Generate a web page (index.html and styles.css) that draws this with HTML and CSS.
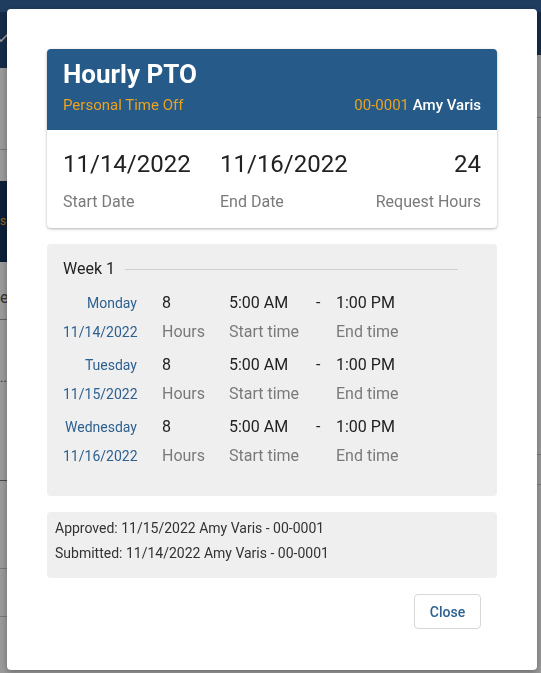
FILE: index.html
```html
<!DOCTYPE html>
<html lang="en">
<head>
<meta charset="utf-8">
<title>Hourly PTO</title>
<link rel="stylesheet" href="styles.css">
</head>
<body>
<div class="app">
  <div class="app-left">
    <div class="bar bar-tall">
      <div class="bar-strip"></div>
      <svg class="bar-check" width="12" height="10" viewBox="0 0 12 10"><polyline points="1,5 4,8 11,1" fill="none" stroke="#ffffff" stroke-width="1.6"/></svg>
    </div>
    <div class="pane pane-a"></div>
    <div class="pane pane-gap"></div>
    <div class="navy-block"><span class="nb-orange">s</span> <span class="nb-blue">for</span></div>
    <div class="pane pane-ee"><span class="ee">eekly</span></div>
    <div class="pane pane-dots"><span class="dots">...</span></div>
    <div class="pane pane-c"></div>
    <div class="pane pane-d"></div>
    <div class="pane pane-e"></div>
  </div>
  <div class="app-right">
    <div class="bar bar-short"><div class="bar-strip"></div></div>
    <div class="pane pane-r1"></div>
    <div class="pane pane-r2"></div>
    <div class="pane pane-r3"></div>
  </div>
</div>
<div class="backdrop"></div>

<div class="modal">
  <section class="card">
    <div class="card-head">
      <h1 class="title">Hourly PTO</h1>
      <div class="subline">
        <span class="type">Personal Time Off</span>
        <span class="who"><span class="emp-id">00-0001</span> <span class="emp-name">Amy Varis</span></span>
      </div>
    </div>
    <div class="card-body">
      <div class="stat">
        <div class="stat-value">11/14/2022</div>
        <div class="stat-label">Start Date</div>
      </div>
      <div class="stat">
        <div class="stat-value">11/16/2022</div>
        <div class="stat-label">End Date</div>
      </div>
      <div class="stat stat-right">
        <div class="stat-value">24</div>
        <div class="stat-label">Request Hours</div>
      </div>
    </div>
  </section>

  <section class="week">
    <div class="week-head">
      <span class="week-title">Week 1</span>
      <span class="week-rule"></span>
    </div>

    <div class="day">
      <span class="day-name">Monday</span>
      <span class="val pad">8</span>
      <span class="val">5:00 AM</span>
      <span class="val dash">-</span>
      <span class="val">1:00 PM</span>
      <span class="day-date">11/14/2022</span>
      <span class="lbl pad">Hours</span>
      <span class="lbl">Start time</span>
      <span class="lbl"></span>
      <span class="lbl">End time</span>
    </div>

    <div class="day">
      <span class="day-name">Tuesday</span>
      <span class="val pad">8</span>
      <span class="val">5:00 AM</span>
      <span class="val dash">-</span>
      <span class="val">1:00 PM</span>
      <span class="day-date">11/15/2022</span>
      <span class="lbl pad">Hours</span>
      <span class="lbl">Start time</span>
      <span class="lbl"></span>
      <span class="lbl">End time</span>
    </div>

    <div class="day">
      <span class="day-name">Wednesday</span>
      <span class="val pad">8</span>
      <span class="val">5:00 AM</span>
      <span class="val dash">-</span>
      <span class="val">1:00 PM</span>
      <span class="day-date">11/16/2022</span>
      <span class="lbl pad">Hours</span>
      <span class="lbl">Start time</span>
      <span class="lbl"></span>
      <span class="lbl">End time</span>
    </div>
  </section>

  <section class="history">
    <div class="history-line">Approved: 11/15/2022 Amy Varis - 00-0001</div>
    <div class="history-line">Submitted: 11/14/2022 Amy Varis - 00-0001</div>
  </section>

  <div class="actions">
    <button class="btn-close" type="button">Close</button>
  </div>
</div>
</body>
</html>
```

FILE: styles.css
```css
* { box-sizing: border-box; }

html, body {
  margin: 0;
  padding: 0;
  height: 100%;
}

body {
  font-family: Roboto, "Liberation Sans", Arial, sans-serif;
  background: #ffffff;
  overflow: hidden;
}

/* ---------- background app ---------- */
.app {
  display: flex;
  height: 673px;
  background: #ffffff;
}

.app-left { width: 270px; }
.app-right { flex: 1; }

.bar {
  position: relative;
  background: #234a78;
}
.bar-tall { height: 68px; }
.bar-short { height: 55px; }

.bar-strip {
  height: 12px;
  background: #32669e;
}

.bar-check {
  position: absolute;
  left: -3px;
  top: 33px;
}

.pane {
  border-bottom: 1px solid #c8c8c8;
}
.pane-a { height: 82px; }
.pane-gap { height: 31px; border-bottom: none; }

.navy-block {
  height: 81px;
  background: #14345d;
  font-size: 12px;
  line-height: 80px;
  white-space: nowrap;
}
.nb-orange { color: #f3a527; }
.nb-blue { color: #4a90d9; }

.pane-ee {
  height: 58px;
  padding-top: 26px;
  font-size: 16px;
  color: #555555;
  white-space: nowrap;
  border-bottom-color: #a0a0a0;
}

.pane-dots {
  height: 161px;
  padding-top: 50px;
  font-size: 13px;
  color: #555555;
  white-space: nowrap;
  border-bottom-color: #777777;
}

.pane-c { height: 88px; }
.pane-d { height: 48px; }
.pane-e { height: 50px; border-bottom: none; }

.pane-r1 { height: 63px; }
.pane-r2 { height: 337px; }
.pane-r3 { height: 30px; }

.backdrop {
  position: fixed;
  inset: 0;
  background: rgba(0, 0, 0, 0.4);
}

/* ---------- modal ---------- */
.modal {
  position: fixed;
  left: 7px;
  top: 9px;
  width: 530px;
  height: 661px;
  background: #ffffff;
  border-radius: 4px;
  box-shadow: 0 2px 6px rgba(0, 0, 0, 0.3);
  padding: 40px 40px 0;
}

.card {
  border-radius: 4px;
  background: #ffffff;
  box-shadow: 0 1px 3px rgba(0, 0, 0, 0.3);
  overflow: hidden;
}

.card-head {
  background: #265a88;
  padding: 10px 16px 15px;
}

.title {
  margin: 0;
  font-size: 26px;
  line-height: 30px;
  font-weight: 700;
  color: #ffffff;
}

.subline {
  margin-top: 6px;
  display: flex;
  justify-content: space-between;
  align-items: baseline;
  font-size: 15px;
  line-height: 20px;
}

.type { color: #eba21f; }
.emp-id { color: #eba21f; }
.emp-name { color: #ffffff; font-weight: 500; }

.card-body {
  display: grid;
  grid-template-columns: 157px 1fr auto;
  padding: 20px 16px 16px;
}

.stat-right { text-align: right; }

.stat-value {
  font-size: 24px;
  line-height: 28px;
  color: #222222;
}

.stat-label {
  margin-top: 14px;
  font-size: 16px;
  line-height: 20px;
  color: #7a7a7a;
}

/* ---------- week ---------- */
.week {
  margin-top: 16px;
  background: #efefef;
  border-radius: 4px;
  padding: 15px 39px 29px 16px;
}

.week-head {
  display: flex;
  align-items: center;
  gap: 10px;
  height: 20px;
  margin-bottom: 13px;
}

.week-title {
  font-size: 16px;
  line-height: 20px;
  color: #222222;
}

.week-rule {
  flex: 1;
  height: 1px;
  background: #cfcfcf;
  margin-top: 1px;
}

.day {
  display: grid;
  grid-template-columns: 74px 92px 87px 20px 1fr;
  row-gap: 7px;
  align-items: baseline;
  line-height: 22px;
}

.day + .day { margin-top: 11px; }

.day-name,
.day-date {
  font-size: 14px;
  color: #2e6190;
  text-align: right;
}

.val {
  font-size: 16px;
  color: #222222;
}

.lbl {
  font-size: 16px;
  color: #7a7a7a;
}

.pad { padding-left: 25px; }

.dash { padding-left: 0; }

/* ---------- history ---------- */
.history {
  margin-top: 16px;
  background: #efefef;
  border-radius: 4px;
  padding: 4px 8px 12px;
}

.history-line {
  font-size: 14px;
  line-height: 25px;
  color: #333333;
}

/* ---------- actions ---------- */
.actions {
  display: flex;
  justify-content: flex-end;
  padding: 16px 16px 0;
}

.btn-close {
  height: 35px;
  width: 67px;
  padding: 0;
  background: #ffffff;
  border: 1px solid #d8d8d8;
  border-radius: 4px;
  font-family: Roboto, "Liberation Sans", Arial, sans-serif;
  font-size: 14px;
  font-weight: 500;
  color: #2e6190;
}
```
